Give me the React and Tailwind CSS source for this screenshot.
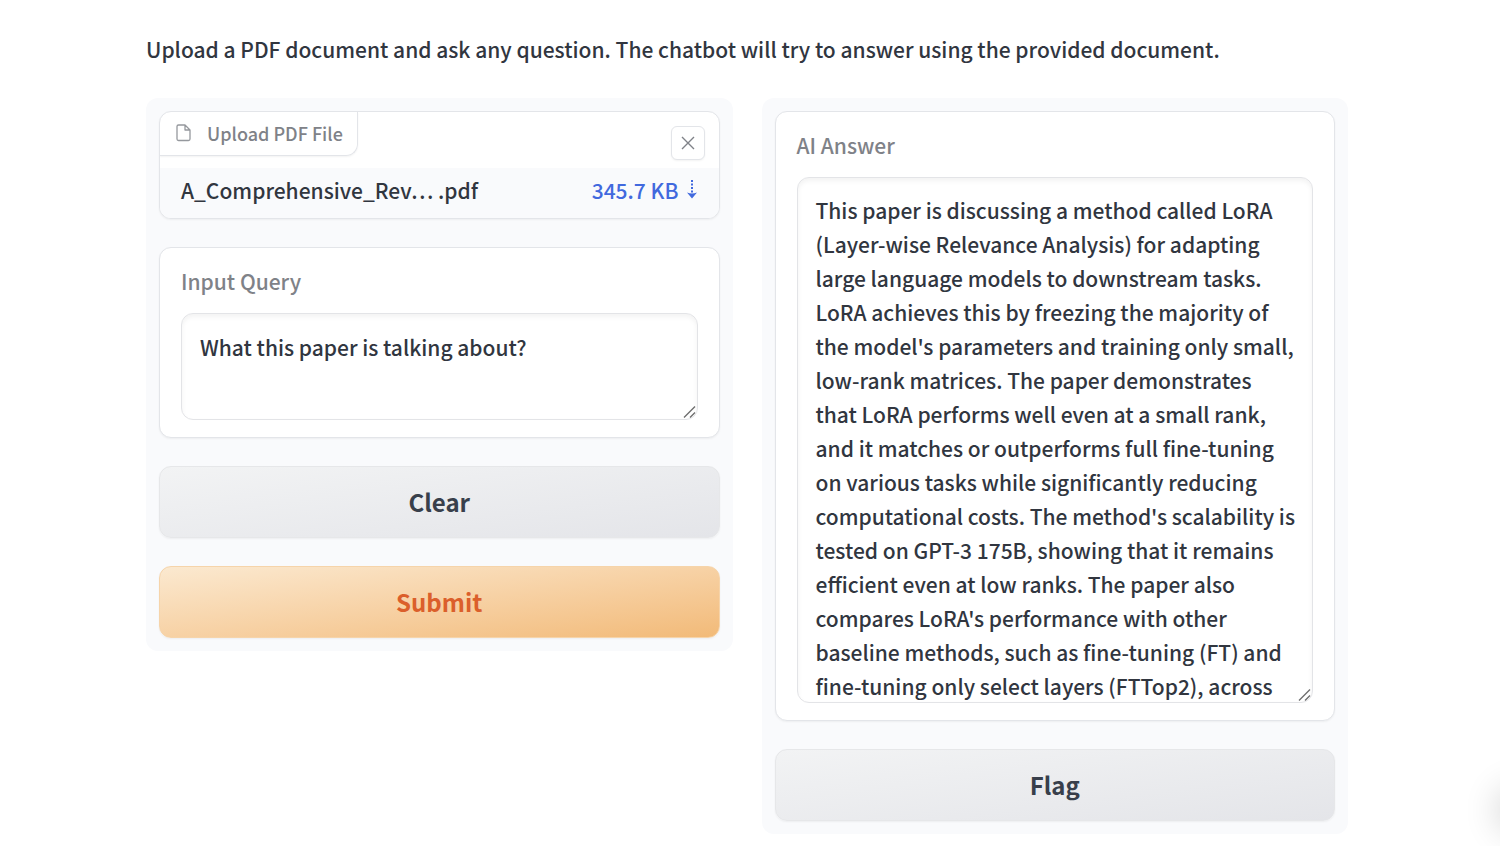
import { useState } from "react";

const ANSWER =
  "This paper is discussing a method called LoRA (Layer-wise Relevance Analysis) for adapting large language models to downstream tasks. LoRA achieves this by freezing the majority of the model's parameters and training only small, low-rank matrices. The paper demonstrates that LoRA performs well even at a small rank, and it matches or outperforms full fine-tuning on various tasks while significantly reducing computational costs. The method's scalability is tested on GPT-3 175B, showing that it remains efficient even at low ranks. The paper also compares LoRA's performance with other baseline methods, such as fine-tuning (FT) and fine-tuning only select layers (FTTop2), across";

function Panel({ children }) {
  return <section className="flex min-w-0 flex-1 flex-col gap-7 rounded-xl bg-[#f9fafc] p-[13px]">{children}</section>;
}

function Grip() {
  return (
    <svg
      className="pointer-events-none absolute right-0 bottom-0 h-4 w-4"
      viewBox="0 0 16 16"
      fill="none"
      stroke="#6f6f6f"
      strokeWidth="1.4"
      aria-hidden="true"
    >
      <path d="M2 13.5 13 2.5M8 13.5 13 8.5" />
    </svg>
  );
}

function TextCard({ id, label, value, onChange, readOnly, areaClass }) {
  return (
    <div className="flex flex-col gap-[15px] rounded-xl border border-[#e3e5e9] bg-white px-[21px] pt-4 pb-[17px] shadow-xs">
      <label htmlFor={id} className="text-[21px] leading-[34px] font-medium text-[#7f8288]">
        {label}
      </label>
      <div className="relative">
        <textarea
          id={id}
          value={value}
          onChange={onChange}
          readOnly={readOnly}
          className={
            "block w-full resize-none overflow-hidden rounded-xl border border-[#e3e4e7] bg-white pl-[18px] pr-[17px] text-[21px] leading-[34px] font-medium text-[#31363f] shadow-[inset_0_3px_5px_0_rgba(0,0,0,0.05)] outline-none " +
            areaClass
          }
        />
        <Grip />
      </div>
    </div>
  );
}

function ActionButton({ tone, children, onClick }) {
  return (
    <button
      type="button"
      onClick={onClick}
      className={"h-[72px] w-full rounded-xl border pb-px text-[24px] leading-8 font-bold shadow-xs " + tone}
    >
      {children}
    </button>
  );
}

const GRAY = "border-[#e6e7e9] bg-linear-to-br from-[#f2f3f4] to-[#e4e5e9] text-[#383f4b]";
const ORANGE = "border-[#f6d4aa] bg-linear-to-br from-[#fbe9d0] to-[#f2ba78] text-[#db5f2b]";

export default function App() {
  const [query, setQuery] = useState("What this paper is talking about?");

  return (
    <main className="relative min-h-screen overflow-hidden bg-white pt-8 pr-[152px] pb-[10px] pl-[146px] font-['Noto_Sans_CJK_SC',sans-serif]">
      <p className="text-[21px] leading-[34px] font-medium text-[#31363f]">
        Upload a PDF document and ask any question. The chatbot will try to answer using the provided document.
      </p>

      <div className="mt-8 flex items-start gap-[29px]">
        <Panel>
          <div className="overflow-hidden rounded-xl border border-[#e3e5e9] bg-white shadow-xs">
            <div className="flex h-14 items-start justify-between pr-[14px]">
              <div className="flex h-11 items-center gap-[15px] rounded-br-xl border-r border-b border-[#e3e5e9] pr-[14px] pb-[2px] pl-[15px] text-[#7f8288] shadow-xs">
                <svg width="17" height="20" viewBox="0 0 17 20" fill="none" stroke="#95989d" strokeWidth="1.3" strokeLinejoin="round" aria-hidden="true">
                  <path d="M10 2H3.5A1.5 1.5 0 0 0 2 3.500V16a1.500 1.500 0 0 0 1.500 1.500H13.500A1.500 1.500 0 0 0 15 16V7ZM10 2V7H15" />
                </svg>
                <span className="text-[18px] leading-7 font-medium">Upload PDF File</span>
              </div>
              <button
                type="button"
                aria-label="Remove file"
                className="mt-[14px] flex h-[34px] w-[34px] items-center justify-center rounded-md border border-[#e3e5e9] bg-white text-[#7f8288] shadow-xs"
              >
                <svg width="14" height="14" viewBox="0 0 14 14" fill="none" stroke="currentColor" strokeWidth="1.4" aria-hidden="true">
                  <path d="M1 1 13 13M13 1 1 13" />
                </svg>
              </button>
            </div>
            <div className="flex h-[50px] items-center justify-between bg-[#f9fafc] px-[21px] pb-[6px] text-[21px] leading-[34px] font-medium">
              <span className="text-[#31363f]">A_Comprehensive_Rev… .pdf</span>
              <a href="#download" className="flex items-center gap-[7px] text-[#4169de]">
                345.7 KB
                <svg width="12" height="20" viewBox="0 0 12 20" fill="none" aria-hidden="true">
                  <path d="M6 0V14" stroke="currentColor" strokeWidth="2" strokeDasharray="2 1.500" />
                  <path d="M1 12.500Q6 14.500 11 12.500L6 18.500Z" fill="currentColor" />
                </svg>
              </a>
            </div>
          </div>

          <TextCard
            id="query"
            label="Input Query"
            value={query}
            onChange={(e) => setQuery(e.target.value)}
            areaClass="h-[107px] pt-4"
          />

          <ActionButton tone={GRAY} onClick={() => setQuery("")}>
            Clear
          </ActionButton>
          <ActionButton tone={ORANGE}>Submit</ActionButton>
        </Panel>

        <Panel>
          <TextCard id="answer" label="AI Answer" value={ANSWER} readOnly areaClass="h-[526px] pt-[15px]" />
          <ActionButton tone={GRAY}>Flag</ActionButton>
        </Panel>
      </div>

      <div className="absolute top-[790px] -right-10 h-10 w-10 rounded-full shadow-[0_0_34px_4px_rgba(0,0,0,0.16)]" aria-hidden="true" />
    </main>
  );
}
